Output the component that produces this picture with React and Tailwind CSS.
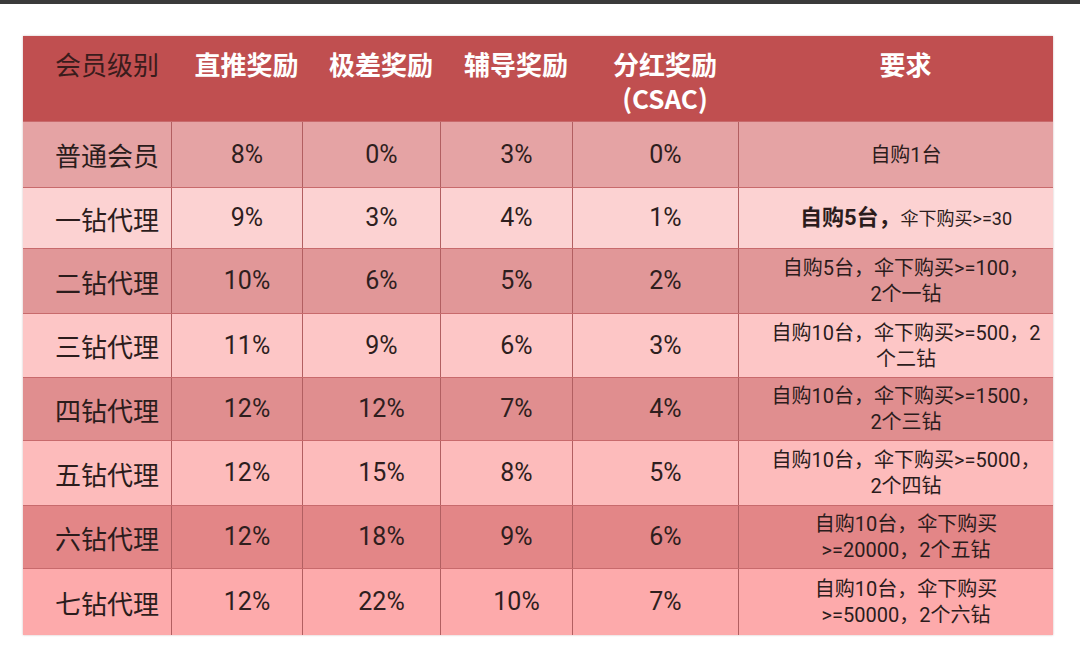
const cjk = { fontFamily: '"Noto Sans CJK SC", "Noto Sans", sans-serif' };
const num = { fontFamily: 'Roboto, "Noto Sans CJK SC", sans-serif' };

const headers = ["直推奖励", "极差奖励", "辅导奖励"];

const rows = [
  { name: "普通会员", vals: ["8%", "0%", "3%", "0%"], req: ["自购1台"], bg: "bg-[#e5a3a4]", h: "h-[66px]" },
  { name: "一钻代理", vals: ["9%", "3%", "4%", "1%"], req: null, bg: "bg-[#fcd2d2]", h: "h-[61px]" },
  { name: "二钻代理", vals: ["10%", "6%", "5%", "2%"], req: ["自购5台，伞下购买>=100，", "2个一钻"], bg: "bg-[#e19798]", h: "h-[65px]" },
  { name: "三钻代理", vals: ["11%", "9%", "6%", "3%"], req: ["自购10台，伞下购买>=500，2", "个二钻"], bg: "bg-[#fdc6c6]", h: "h-[64px]" },
  { name: "四钻代理", vals: ["12%", "12%", "7%", "4%"], req: ["自购10台，伞下购买>=1500，", "2个三钻"], bg: "bg-[#e08e8f]", h: "h-[63px]" },
  { name: "五钻代理", vals: ["12%", "15%", "8%", "5%"], req: ["自购10台，伞下购买>=5000，", "2个四钻"], bg: "bg-[#fdbbbb]", h: "h-[65px]" },
  { name: "六钻代理", vals: ["12%", "18%", "9%", "6%"], req: ["自购10台，伞下购买", ">=20000，2个五钻"], bg: "bg-[#e38687]", h: "h-[63px]" },
  { name: "七钻代理", vals: ["12%", "22%", "10%", "7%"], req: ["自购10台，伞下购买", ">=50000，2个六钻"], bg: "bg-[#fdaaab]", h: "h-[67px]" },
];

const cols = "grid grid-cols-[148px_131px_138px_132px_166px_315px]";

export default function App() {
  return (
    <div className="w-[1080px] h-[654px] bg-white overflow-hidden">
      <div className="h-[4px] bg-[#3a3a3a]" />
      <div className="pt-[32px] pl-[23px]">
        <div className="w-[1030px] shadow-[0_0_2px_rgba(120,60,60,0.35)]">
          {/* header */}
          <div className={`${cols} h-[85px] bg-[#c04f50]`} style={cjk}>
            <div className="pl-5 pt-[11px] text-center text-[26px] leading-[34px] text-[#3a1c1c]">会员级别</div>
            {headers.map((h) => (
              <div key={h} className="pl-5 pt-[11px] text-center text-[26px] leading-[34px] font-bold text-white">
                {h}
              </div>
            ))}
            <div className="pl-5 pt-[11px] text-center text-[26px] leading-[34px] font-bold text-white">
              分红奖励
              <br />
              (CSAC)
            </div>
            <div className="pl-5 pt-[11px] text-center text-[26px] leading-[34px] font-bold text-white">要求</div>
          </div>

          {rows.map((r) => (
            <div key={r.name} className={`${cols} ${r.h} ${r.bg} border-t border-[#c86a6c]`}>
              <div className="flex items-center justify-center pl-5 text-[26px] text-[#2b1c1c]" style={cjk}>
                {r.name}
              </div>
              {r.vals.map((v, i) => (
                <div
                  key={i}
                  className="flex items-center justify-center pl-5 border-l border-[#b25f61] text-[25px] text-[#2e1e1e]"
                  style={num}
                >
                  {v}
                </div>
              ))}
              <div
                className="flex flex-col items-center justify-center pl-5 border-l border-[#b25f61] text-[20px] leading-[26px] text-[#2b1c1c] whitespace-nowrap"
                style={num}
              >
                {r.req ? (
                  r.req.map((line) => <span key={line}>{line}</span>)
                ) : (
                  <span>
                    <span className="text-[22px] font-bold">自购5台，</span>
                    <span className="text-[18px]">伞下购买&gt;=30</span>
                  </span>
                )}
              </div>
            </div>
          ))}
        </div>
      </div>
    </div>
  );
}
